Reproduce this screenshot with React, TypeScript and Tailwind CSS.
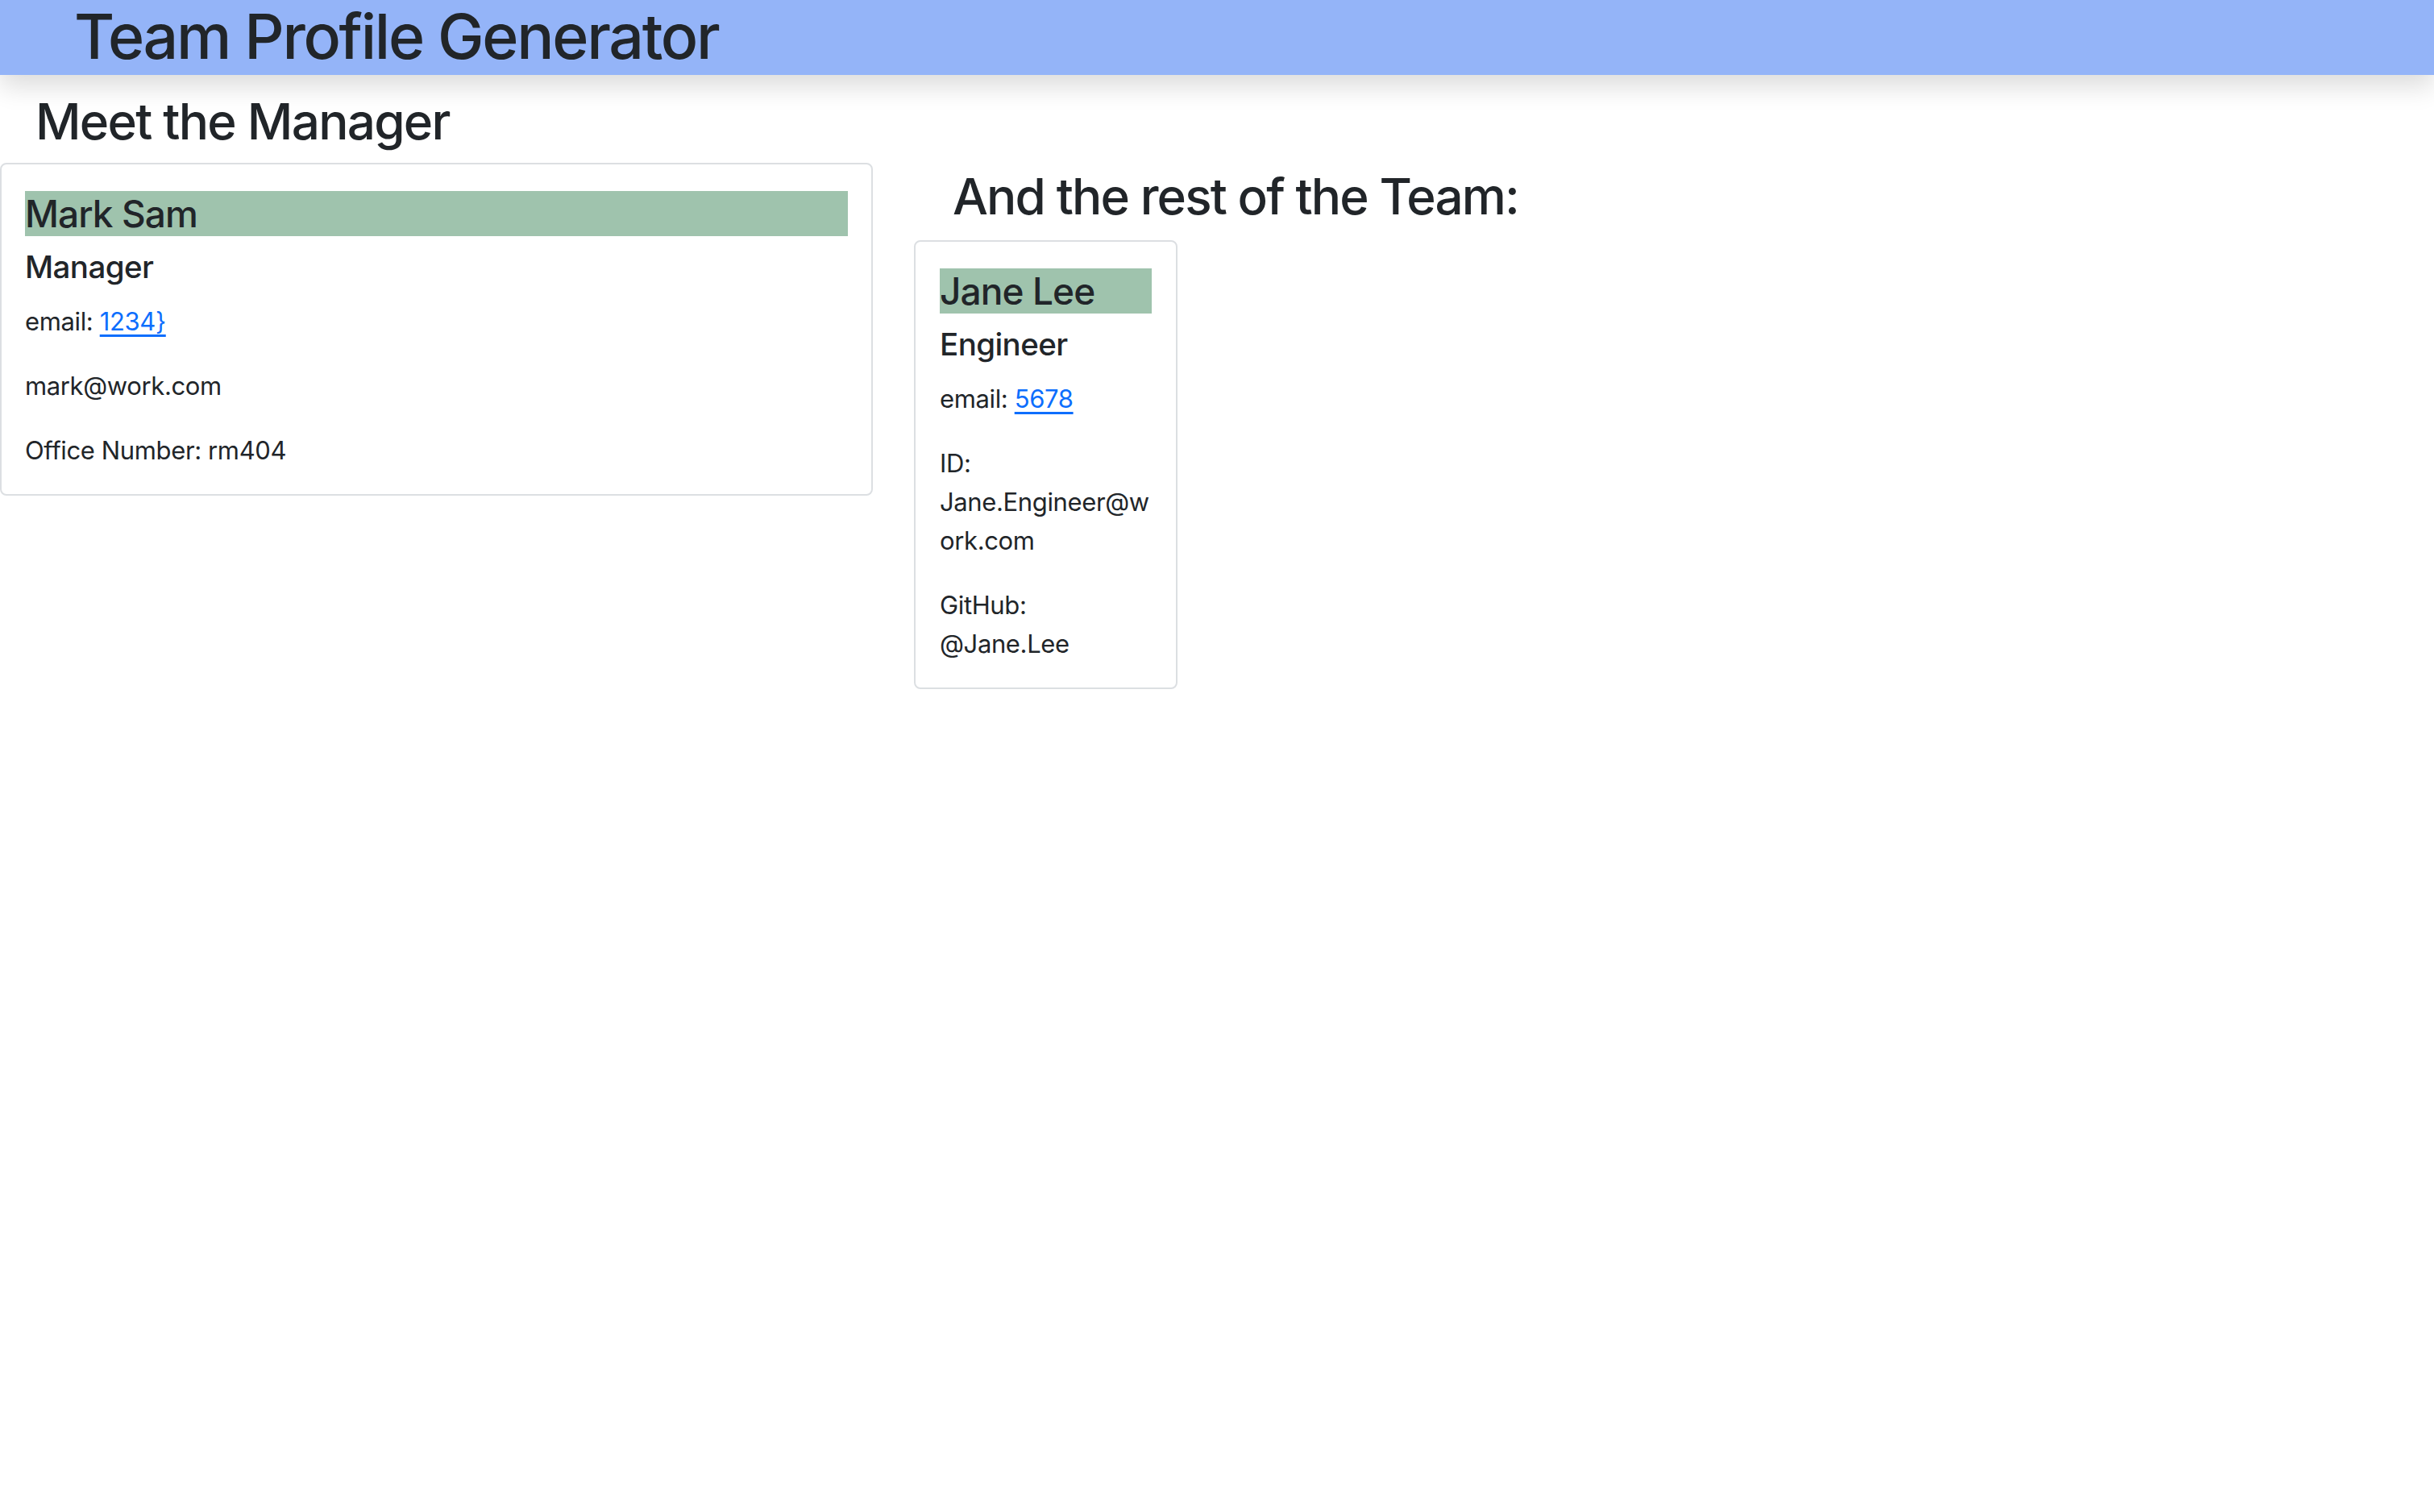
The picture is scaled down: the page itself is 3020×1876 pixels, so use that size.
import React from "react";

type Member = {
  name: string;
  role: string;
  email: string;
  lines: string[];
};

const manager: Member = {
  name: "Mark Sam",
  role: "Manager",
  email: "1234}",
  lines: ["mark@work.com", "Office Number: rm404"],
};

const team: Member[] = [
  {
    name: "Jane Lee",
    role: "Engineer",
    email: "5678",
    lines: ["ID: Jane.Engineer@work.com", "GitHub: @Jane.Lee"],
  },
];

function MemberCard({ member, className }: { member: Member; className: string }) {
  return (
    <div className={`rounded-[8px] border-2 border-[#dcdfe2] bg-white pt-[33px] pb-[30px] ${className}`}>
      <h4 className="mb-[15px] bg-[#9fc3ad] text-[46px] font-medium leading-[56px] tracking-[-0.02em]">{member.name}</h4>
      <h5 className="mb-[21px] text-[38.5px] font-medium leading-[46px] tracking-[-0.015em]">{member.role}</h5>
      <p className="mb-[32px] text-[31px] leading-[48px] tracking-[-0.012em]">
        email:{" "}
        <a href="#" className="text-[#0d6efd] underline underline-offset-[5px]">
          {member.email}
        </a>
      </p>
      {member.lines.map((line, i) => (
        <p
          key={line}
          className={`break-words text-[31px] leading-[48px] tracking-[-0.012em] ${
            i === member.lines.length - 1 ? "" : "mb-[32px]"
          }`}
        >
          {line}
        </p>
      ))}
    </div>
  );
}

export default function App() {
  return (
    <div className="min-h-screen bg-white font-['Inter','Liberation_Sans',Arial,sans-serif] text-[#212529]">
      <header className="relative z-10 h-[93px] bg-[#94b4f8] pl-[92px] shadow-[0_14px_30px_rgba(0,0,0,0.14)]">
        <h1 className="text-[77px] font-medium leading-[90px] tracking-[-0.03em]">Team Profile Generator</h1>
      </header>

      <div className="flex items-start">
        <section className="w-[1083px] shrink-0">
          <h2 className="mt-[21px] mb-[14px] pl-[44px] text-[62px] font-medium leading-[74px] tracking-[-0.028em]">
            Meet the Manager
          </h2>
          <MemberCard member={manager} className="w-[1083px] px-[29px]" />
        </section>

        <section className="ml-[51px]">
          <h2 className="mt-[114px] mb-[17px] pl-[48px] text-[62px] font-medium leading-[74px] tracking-[-0.03em]">
            And the rest of the Team:
          </h2>
          {team.map((m) => (
            <MemberCard key={m.name} member={m} className="w-[327px] px-[30px]" />
          ))}
        </section>
      </div>
    </div>
  );
}
